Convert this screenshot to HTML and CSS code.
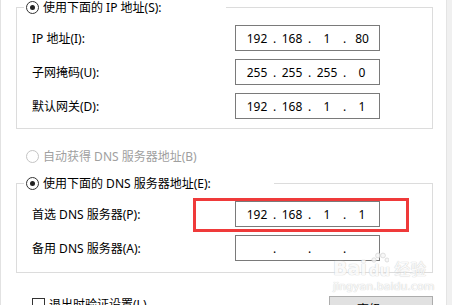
FILE: index.html
```html
<!DOCTYPE html>
<html>
<head>
  <title>Internet 协议版本 4 (TCP/IPv4) 属性</title>
  <link rel="stylesheet" href="styles.css">
</head>
<body>
  <div class="dialog">
    <div class="panel">
      <fieldset class="group">
        <legend class="group-title ip-title"><span class="title-inner"><span class="radio checked"></span>使用下面的 IP 地址(S):</span></legend>
        <div class="rows">
          <div class="row">
            <span class="label">IP 地址(I):</span>
            <div class="ipbox"><span>192</span><i>.</i><span>168</span><i>.</i><span>1</span><i>.</i><span>80</span></div>
          </div>
          <div class="row">
            <span class="label">子网掩码(U):</span>
            <div class="ipbox"><span>255</span><i>.</i><span>255</span><i>.</i><span>255</span><i>.</i><span>0</span></div>
          </div>
          <div class="row">
            <span class="label">默认网关(D):</span>
            <div class="ipbox"><span>192</span><i>.</i><span>168</span><i>.</i><span>1</span><i>.</i><span>1</span></div>
          </div>
        </div>
      </fieldset>

      <div class="option disabled"><span class="radio"></span>自动获得 DNS 服务器地址(B)</div>

      <fieldset class="group dns">
        <legend class="group-title dns-title"><span class="title-inner"><span class="radio checked"></span>使用下面的 DNS 服务器地址(E):</span></legend>
        <div class="rows">
          <div class="row marked">
            <span class="label">首选 DNS 服务器(P):</span>
            <div class="ipbox"><span>192</span><i>.</i><span>168</span><i>.</i><span>1</span><i>.</i><span>1</span></div>
            <div class="mark"></div>
          </div>
          <div class="row">
            <span class="label">备用 DNS 服务器(A):</span>
            <div class="ipbox"><span></span><i>.</i><span></span><i>.</i><span></span><i>.</i><span></span></div>
          </div>
        </div>
      </fieldset>

      <div class="footer">
        <label class="check"><span class="checkbox"></span>退出时验证设置(L)</label>
        <button class="btn">高级(V)...</button>
      </div>

      <div class="watermark">
        <div class="wm-logo">
          <span>Bai</span>
          <span class="paw">
            <svg width="18" height="12" viewBox="0 0 18 12">
              <circle cx="3" cy="8" r="2.2"/>
              <circle cx="7" cy="3.5" r="2.4"/>
              <circle cx="12" cy="3.5" r="2.4"/>
              <circle cx="16" cy="8" r="2"/>
            </svg>
            <span class="du">du</span>
          </span>
          <span class="jy">经验</span>
        </div>
        <div class="wm-url">jingyan.baidu.com</div>
      </div>
    </div>
    <div class="scroll"></div>
  </div>
</body>
</html>
```

FILE: styles.css
```css
* {
  margin: 0;
  padding: 0;
  box-sizing: border-box;
}

body {
  font-family: "Noto Sans", "Noto Sans CJK SC", sans-serif;
  font-size: 12px;
  line-height: 15px;
  color: #000;
  background: #fff;
  overflow: hidden;
}

.dialog {
  display: flex;
  width: 452px;
  height: 305px;
  overflow: hidden;
}

.panel {
  position: relative;
  width: 446px;
  border-left: 1px solid #e2e2e2;
  padding-left: 15px;
}

.scroll {
  width: 6px;
  background: #f0f0f0;
  border-left: 1px solid #e4e4e4;
}

.group {
  width: 417px;
  min-width: 0;
  border: 1px solid #dcdcdc;
  padding: 0 0 9px 7px;
}

.group.dns {
  margin-top: 12px;
  padding-bottom: 11px;
}

.group-title {
  height: 15px;
  padding: 0 2px;
  background: #fff;
}

.ip-title {
  width: 202px;
}

.dns-title {
  width: 250px;
}

.title-inner {
  display: flex;
  align-items: center;
  height: 15px;
  white-space: nowrap;
}

.radio {
  position: relative;
  display: inline-block;
  flex: none;
  width: 13px;
  height: 13px;
  border: 1px solid #333;
  border-radius: 50%;
  margin-right: 4px;
  background: #fff;
}

.radio.checked::after {
  content: "";
  position: absolute;
  left: 3px;
  top: 3px;
  width: 5px;
  height: 5px;
  border-radius: 50%;
  background: #222;
}

.rows {
  display: flex;
  flex-direction: column;
  gap: 8px;
  padding: 10px 0 0 8px;
}

.row {
  display: grid;
  grid-template-columns: 203px 145px;
  align-items: center;
}

.row.marked {
  position: relative;
}

.mark {
  position: absolute;
  left: 161px;
  top: -3px;
  width: 216px;
  height: 34px;
  border: 3px solid #ef3a3a;
}

.label {
  white-space: nowrap;
}

.ipbox {
  display: grid;
  grid-template-columns: 30px 5px 30px 5px 30px 5px 30px;
  align-items: center;
  height: 26px;
  padding-left: 6px;
  border: 1px solid #7a7a7a;
  background: #fff;
}

.ipbox span {
  text-align: center;
}

.ipbox i {
  font-style: normal;
  text-align: center;
}

.option {
  display: flex;
  align-items: center;
  height: 15px;
  margin-top: 20px;
  padding-left: 10px;
  white-space: nowrap;
}

.option.disabled {
  color: #a0a0a0;
}

.option.disabled .radio {
  border-color: #c4c4c4;
}

.footer {
  display: flex;
  justify-content: space-between;
  align-items: flex-start;
  width: 417px;
  margin-top: 23px;
  padding-left: 16px;
}

.check {
  display: flex;
  align-items: center;
  gap: 4px;
  margin-top: 1px;
}

.checkbox {
  width: 13px;
  height: 13px;
  border: 1px solid #333;
  background: #fff;
}

.btn {
  width: 104px;
  height: 27px;
  font: inherit;
  background: #e1e1e1;
  border: 1px solid #adadad;
}

.watermark {
  position: absolute;
  left: 332px;
  top: 252px;
  color: #fafafa;
  text-shadow: 0 0 1px #c8c8c8, 0 0 1px #c8c8c8;
  font-family: "DejaVu Sans", sans-serif;
  opacity: 0.8;
}

.wm-logo {
  display: flex;
  align-items: flex-end;
  font-size: 19px;
  line-height: 22px;
  font-weight: bold;
}

.paw {
  display: flex;
  flex-direction: column;
  align-items: center;
  margin: 0 2px;
}

.paw svg {
  fill: #f6f6f6;
  stroke: #cfcfcf;
  stroke-width: 0.8;
}

.du {
  font-size: 15px;
  line-height: 15px;
}

.jy {
  font-family: "Noto Sans CJK SC", sans-serif;
  font-size: 16px;
  font-weight: normal;
  margin-left: 2px;
}

.wm-url {
  font-size: 11px;
  line-height: 13px;
  margin-top: 1px;
}
```
